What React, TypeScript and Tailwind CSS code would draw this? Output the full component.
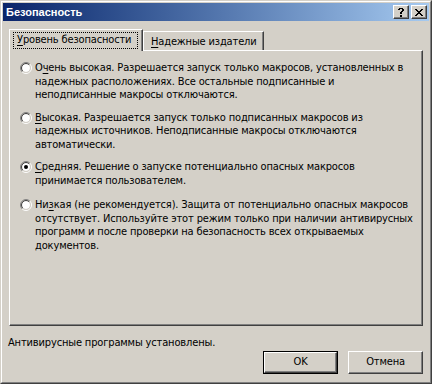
import React from "react";

const FONT = "font-['DejaVu_Sans_Condensed','Liberation_Sans',sans-serif]";

function Glyph({ rows }: { rows: string[] }) {
  const w = rows[0].length;
  const h = rows.length;
  return (
    <svg width={w} height={h} shapeRendering="crispEdges" className="block">
      {rows.flatMap((r, y) =>
        r.split("").map((c, x) =>
          c === "x" ? <rect key={`${x}-${y}`} x={x} y={y} width={1} height={1} fill="#000" /> : null
        )
      )}
    </svg>
  );
}

const HELP = [
  ".xxxx.",
  "xx..xx",
  "....xx",
  "...xx.",
  "..xx..",
  "..xx..",
  "......",
  "..xx..",
  "..xx..",
];
const CLOSE = [
  "xx....xx",
  ".xx..xx.",
  "..xxxx..",
  "...xx...",
  "..xxxx..",
  ".xx..xx.",
  "xx....xx",
];

function CapButton({ children }: { children: React.ReactNode }) {
  return (
    <div className="w-[16px] h-[14px] bg-[#d4d0c8] border border-t-white border-l-white border-r-[#404040] border-b-[#404040] shadow-[inset_-1px_-1px_0_#808080] flex items-center justify-center">
      {children}
    </div>
  );
}

function Radio({ checked }: { checked?: boolean }) {
  const a = 0.7071;
  const tl = (r: number) => `M ${6 - r * a} ${6 + r * a} A ${r} ${r} 0 0 1 ${6 + r * a} ${6 - r * a}`;
  const br = (r: number) => `M ${6 + r * a} ${6 - r * a} A ${r} ${r} 0 0 1 ${6 - r * a} ${6 + r * a}`;
  return (
    <svg width={12} height={12} className="block shrink-0">
      <circle cx={6} cy={6} r={4} fill="#fff" />
      <path d={tl(5.5)} stroke="#808080" strokeWidth={1} fill="none" />
      <path d={br(5.5)} stroke="#fff" strokeWidth={1} fill="none" />
      <path d={tl(4.5)} stroke="#404040" strokeWidth={1} fill="none" />
      <path d={br(4.5)} stroke="#d4d0c8" strokeWidth={1} fill="none" />
      {checked && <circle cx={6} cy={6} r={2} fill="#000" />}
    </svg>
  );
}

function Option({
  checked,
  lines,
  className,
}: {
  checked?: boolean;
  lines: React.ReactNode[];
  className: string;
}) {
  return (
    <div className={`flex items-start pl-[10px] ${className}`}>
      <div className="pt-[1px]">
        <Radio checked={checked} />
      </div>
      <div className="ml-[3px] leading-[13.5px] whitespace-nowrap">
        {lines.map((l, i) => (
          <div key={i}>{l}</div>
        ))}
      </div>
    </div>
  );
}

export default function App() {
  return (
    <div className={`w-[432px] h-[384px] bg-[#d4d0c8] overflow-hidden text-[11px] tracking-[-0.15px] text-black ${FONT}`}>
      <div className="h-full border border-t-[#d4d0c8] border-l-[#d4d0c8] border-r-[#404040] border-b-[#404040]">
        <div className="h-full border border-t-white border-l-white border-r-[#808080] border-b-[#808080] p-px flex flex-col">
          {/* Title bar */}
          <div className="h-[18px] bg-gradient-to-r from-[#0a246a] to-[#a6caf0] flex items-center pl-[3px] pr-[2px]">
            <span className="text-white font-bold leading-none font-['Liberation_Sans',sans-serif] tracking-normal">Безопасность</span>
            <div className="ml-auto flex gap-[2px]">
              <CapButton>
                <Glyph rows={HELP} />
              </CapButton>
              <CapButton>
                <Glyph rows={CLOSE} />
              </CapButton>
            </div>
          </div>

          <div className="flex flex-col px-[6px] pt-[8px]">
            {/* Tabs */}
            <div className="flex items-end h-[21px]">
              <div className="relative z-10 -mb-px h-[22px] w-[134px] bg-[#d4d0c8] border-l border-t border-r border-l-white border-t-white border-r-[#404040] shadow-[inset_-1px_0_0_#808080] pt-[2px] pl-[3px]">
                <div className="h-[17px] w-[125px] border border-dotted border-black flex items-center pl-[3px]">
                  <span>
                    <span className="underline underline-offset-2">У</span>ровень безопасности
                  </span>
                </div>
              </div>
              <div className="h-[19px] w-[121px] border-l border-t border-r border-l-white border-t-white border-r-[#404040] shadow-[inset_-1px_0_0_#808080] flex items-center pl-[7px] pt-[2px]">
                <span>
                  <span className="underline underline-offset-2">Н</span>адежные издатели
                </span>
              </div>
            </div>

            {/* Panel */}
            <div className="h-[276px] border border-t-white border-l-white border-r-[#404040] border-b-[#404040] shadow-[inset_-1px_-1px_0_#808080] flex flex-col">
              <Option
                className="mt-[10px]"
                lines={[
                  <>
                    О<span className="underline underline-offset-2">ч</span>ень высокая. Разрешается запуск только макросов, установленных в
                  </>,
                  "надежных расположениях. Все остальные подписанные и",
                  "неподписанные макросы отключаются.",
                ]}
              />
              <Option
                className="mt-[9px]"
                lines={[
                  <>
                    <span className="underline underline-offset-2">В</span>ысокая. Разрешается запуск только подписанных макросов из
                  </>,
                  "надежных источников. Неподписанные макросы отключаются",
                  "автоматически.",
                ]}
              />
              <Option
                checked
                className="mt-[9px]"
                lines={[
                  <>
                    <span className="underline underline-offset-2">С</span>редняя. Решение о запуске потенциально опасных макросов
                  </>,
                  "принимается пользователем.",
                ]}
              />
              <Option
                className="mt-[11px]"
                lines={[
                  <>
                    Ни<span className="underline underline-offset-2">з</span>кая (не рекомендуется). Защита от потенциально опасных макросов
                  </>,
                  "отсутствует. Используйте этот режим только при наличии антивирусных",
                  "программ и после проверки на безопасность всех открываемых",
                  "документов.",
                ]}
              />
            </div>

            {/* Footer */}
            <div className="mt-[10px] leading-[13px] -ml-px">Антивирусные программы установлены.</div>
            <div className="mt-[2px] flex justify-end gap-[10px]">
              <div className="w-[75px] h-[23px] border border-black">
                <div className="h-full border border-t-white border-l-white border-r-[#404040] border-b-[#404040] shadow-[inset_-1px_-1px_0_#808080] flex items-center justify-center">
                  OK
                </div>
              </div>
              <div className="w-[75px] h-[23px] border border-t-white border-l-white border-r-[#404040] border-b-[#404040] shadow-[inset_-1px_-1px_0_#808080] flex items-center justify-center">
                Отмена
              </div>
            </div>
          </div>
        </div>
      </div>
    </div>
  );
}
